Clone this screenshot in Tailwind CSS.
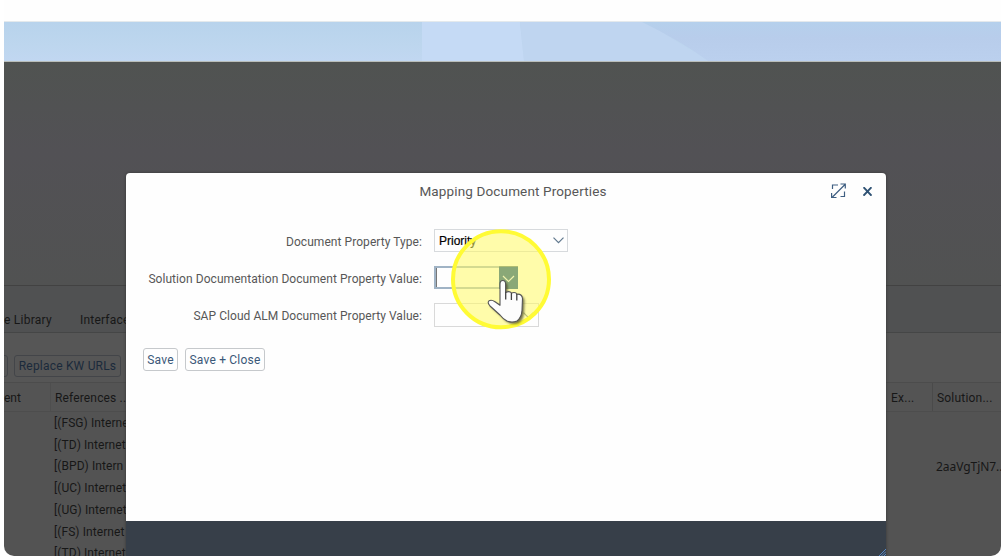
<!DOCTYPE html>
<html lang="en">
<head>
<meta charset="utf-8">
<title>Mapping Document Properties</title>
<script src="https://cdn.jsdelivr.net/npm/@tailwindcss/browser@4"></script>
</head>
<body class="h-[560px] w-[1004px] overflow-hidden bg-white font-[Roboto,sans-serif] text-[12px] leading-4">
<div class="relative ml-1 flex h-[556px] w-[997px] flex-col overflow-hidden rounded-b-[10px] bg-[#535353] text-[#171717]">
  <div class="h-[22px] shrink-0 border-b border-[#e4e9ec] bg-[#fefefe]"></div>
  <!-- Page banner -->
  <svg class="h-[39px] w-full shrink-0" viewBox="0 0 997 39" preserveAspectRatio="none">
    <defs>
      <linearGradient id="sky" x1="0" y1="0" x2="0" y2="1"><stop offset="0" stop-color="#b8d3ec"/><stop offset=".6" stop-color="#bdd6ee"/><stop offset="1" stop-color="#c1d7f1"/></linearGradient>
      <linearGradient id="dusk" x1="0" y1="0" x2="0" y2="1"><stop offset="0" stop-color="#b5d0ec"/><stop offset=".4" stop-color="#b8cdeb"/><stop offset="1" stop-color="#bbd0ee"/></linearGradient>
    </defs>
    <rect width="997" height="39" fill="url(#sky)"/>
    <path d="M418 0h98l4 39H418z" fill="#c5daf5"/>
    <path d="M516 0h126l62 39H520z" fill="#bfd5f0"/>
    <path d="M638 0h359v39H704Q675 18 638 0z" fill="url(#dusk)"/>
  </svg>
  <div class="h-[225px] shrink-0 border-t border-b border-t-[#b9beba] border-b-[#424242] bg-linear-to-b from-[#505351] via-[#525155] via-40% to-[#515252]"></div>
  <!-- Tabs -->
  <div class="flex h-[47px] shrink-0 items-center border-b border-[#454646] bg-[#505152] pt-[22px]">
    <span class="w-[76px] whitespace-nowrap"><span class="tracking-[0.25px]">e Library</span></span>
    <span class="tracking-[0.2px]">Interface</span>
  </div>
  <!-- Toolbar -->
  <div class="flex h-[50px] shrink-0 items-center border-b border-[#4c4c4c] bg-[#565656] pt-4">
    <div class="-ml-1 mr-[6px] h-[22px] w-2 rounded-r-[3px] border border-[#434549]"></div>
    <div class="flex h-[22px] w-[107px] items-center justify-center rounded-[3px] border border-[#434549] text-[#1b2a3b]"><span class="whitespace-nowrap tracking-[0.2px]">Replace KW URLs</span></div>
  </div>
  <!-- Table header -->
  <div class="flex h-[29px] shrink-0 items-center border-b border-[#4d4d4d] bg-[#545454] whitespace-nowrap">
    <span class="w-[46px] pt-px">ent</span>
    <span class="h-full w-px bg-[#4e4e4e]"></span>
    <span class="w-[829px] pl-[4px] pt-px"><span class="tracking-[0.15px]">References ..</span></span>
    <span class="flex h-full w-[53px] items-center border-r border-[#4a4a4a] pl-[11px] pt-px"><span class="tracking-[0.25px]">Ex...</span></span>
    <span class="ml-[4px] pt-px tracking-[0.2px]">Solution...</span>
  </div>
  <!-- Table rows -->
  <div class="flex flex-1 justify-between overflow-hidden whitespace-nowrap pl-[50px] pt-px">
    <div class="flex flex-col leading-[21.7px] tracking-[0.08px]">
      <span>[(FSG) Interne</span><span>[(TD) Internet</span><span>[(BPD) Intern</span><span>[(UC) Internet</span><span>[(UG) Internet</span><span>[(FS) Internet</span><span>[(TD) Internet</span>
    </div>
    <div class="w-[65px] pt-[43.4px] font-['Noto_Sans'] leading-[21.7px]"><span class="tracking-[-0.05px]">2aaVgTjN7..</span></div>
  </div>

  <!-- Dialog -->
  <section class="absolute left-[122px] top-[173px] flex h-[383px] w-[760px] flex-col overflow-hidden rounded-t-[4px] bg-[#fefefe] text-[#575757] shadow-[0_0_3px_#333333]">
    <header class="relative h-[36px] shrink-0 pl-[14px] text-center text-[13.5px] leading-9">
      <span class="tracking-[0.14px]">Mapping Document Properties</span>
      <svg class="absolute left-[705px] top-[10px] h-4 w-4" viewBox="0 0 16 16" fill="none" stroke="#3f5f82" stroke-width="1.2"><path d="M1.500 6V2H7M9.500 13.500H13.500V8.500M1.500 14 14 1.500M9.500 1H14.300V5.500M.6 10V14.500H5.500"/></svg>
      <svg class="absolute left-[737px] top-[14px] h-[9px] w-[9px]" viewBox="0 0 9 9" stroke="#2f5274" stroke-width="1.900"><path d="m.5.2 8 8.500M8.500.2l-8 8.500"/></svg>
    </header>
    <div class="mt-5 grid grid-cols-[296px_auto] gap-x-3 gap-y-[13px] whitespace-nowrap tracking-[0.06px]">
      <label class="flex h-6 items-center justify-end pt-px">Document Property Type:</label>
      <div class="flex h-[23px] w-[134px] items-center justify-between border border-[#d7dadd] pl-1 pr-[3px] text-black">
        <span class="font-['Liberation_Sans'] tracking-normal [-webkit-text-stroke:0.2px_black]">Priority</span>
        <svg class="h-[7px] w-[11px]" viewBox="0 0 11 7" fill="none" stroke="#60788e" stroke-width="1.200"><path d="m.5.7 5 5 5-5"/></svg>
      </div>
      <label class="flex h-6 items-center justify-end pt-px">Solution Documentation Document Property Value:</label>
      <div class="flex h-[23px] w-[84px] justify-between border-2 border-r-0 border-[#a0b3c5]">
        <div class="w-16 border-l border-[#777777]"></div>
        <div class="-my-[2px] w-[19px] bg-[#4e7186]"></div>
      </div>
      <label class="flex h-6 items-center justify-end pt-px">SAP Cloud ALM Document Property Value:</label>
      <div class="flex h-[24px] w-[105px] items-center justify-end border border-[#d9d9d9] pr-1">
        <svg class="h-[7px] w-[11px]" viewBox="0 0 11 7" fill="none" stroke="#60788e" stroke-width="1.200"><path d="m.5.7 5 5 5-5"/></svg>
      </div>
    </div>
    <div class="mt-[21px] flex gap-[7px] pl-[17px] tracking-[0.2px] text-[#3b5878]">
      <button class="flex h-[23px] w-[35px] items-center justify-center rounded-[3px] border border-[#c6c9cc]">Save</button>
      <button class="flex h-[23px] w-[80px] items-center justify-center whitespace-nowrap rounded-[3px] border border-[#c6c9cc]">Save + Close</button>
    </div>
    <footer class="relative mt-auto h-[35px] bg-[#373f49]">
      <svg class="absolute bottom-0 right-0 h-[7px] w-[7px]" viewBox="0 0 7 7" stroke="#5687c5"><path d="M0 7 7 0M2.500 7 7 2.500M5 7l2-2"/></svg>
    </footer>
  </section>

  <!-- Click highlight and pointer -->
  <svg class="absolute left-[446px] top-[229px] h-[102px] w-[104px]" viewBox="450 229 104 102">
    <defs><filter id="soft" x="-20%" y="-20%" width="150%" height="150%"><feGaussianBlur stdDeviation="1.200"/></filter></defs>
    <circle cx="501" cy="279.300" r="47.500" fill="#fffa64" fill-opacity=".55"/>
    <path d="M499 267h19v22h-19z" fill="#8aa877"/>
    <path d="m503 276 5.500 5.500 5.500-5.500" fill="none" stroke="#f1f3ad" stroke-width="1.200"/>
    <circle cx="501" cy="279.300" r="48" fill="none" stroke="#fffb35" stroke-width="4"/>
    <path transform="translate(2 2)" filter="url(#soft)" fill="#4a4a28" fill-opacity=".75" d="M500 284q0-3.500 2.800-3.500t2.800 3.500v8.500q4-2 5.900.5 4-1.500 5.500 1.200 5-.5 5.500 4.300l-.5 12q-.5 7-5 10.500-5 2-10 0-4-2-7-6l-10-9q-3-3.500-1-5.200 2.500-1.500 6 1l5 3.500z"/>
    <path fill="#fdfdfd" stroke="#555555" stroke-width="1.100" stroke-linejoin="round" d="M500 284q0-3.500 2.800-3.500t2.800 3.500v8.500q4-2 5.900.5 4-1.500 5.500 1.200 5-.5 5.500 4.300l-.5 12q-.5 7-5 10.500-5 2-10 0-4-2-7-6l-10-9q-3-3.500-1-5.200 2.500-1.500 6 1l5 3.500z"/>
    <path d="M505.700 292v7.500m5.700-6.500v7m5.400-6v6.500" fill="none" stroke="#444444" stroke-width="1.300"/>
  </svg>
</div>
</body>
</html>
